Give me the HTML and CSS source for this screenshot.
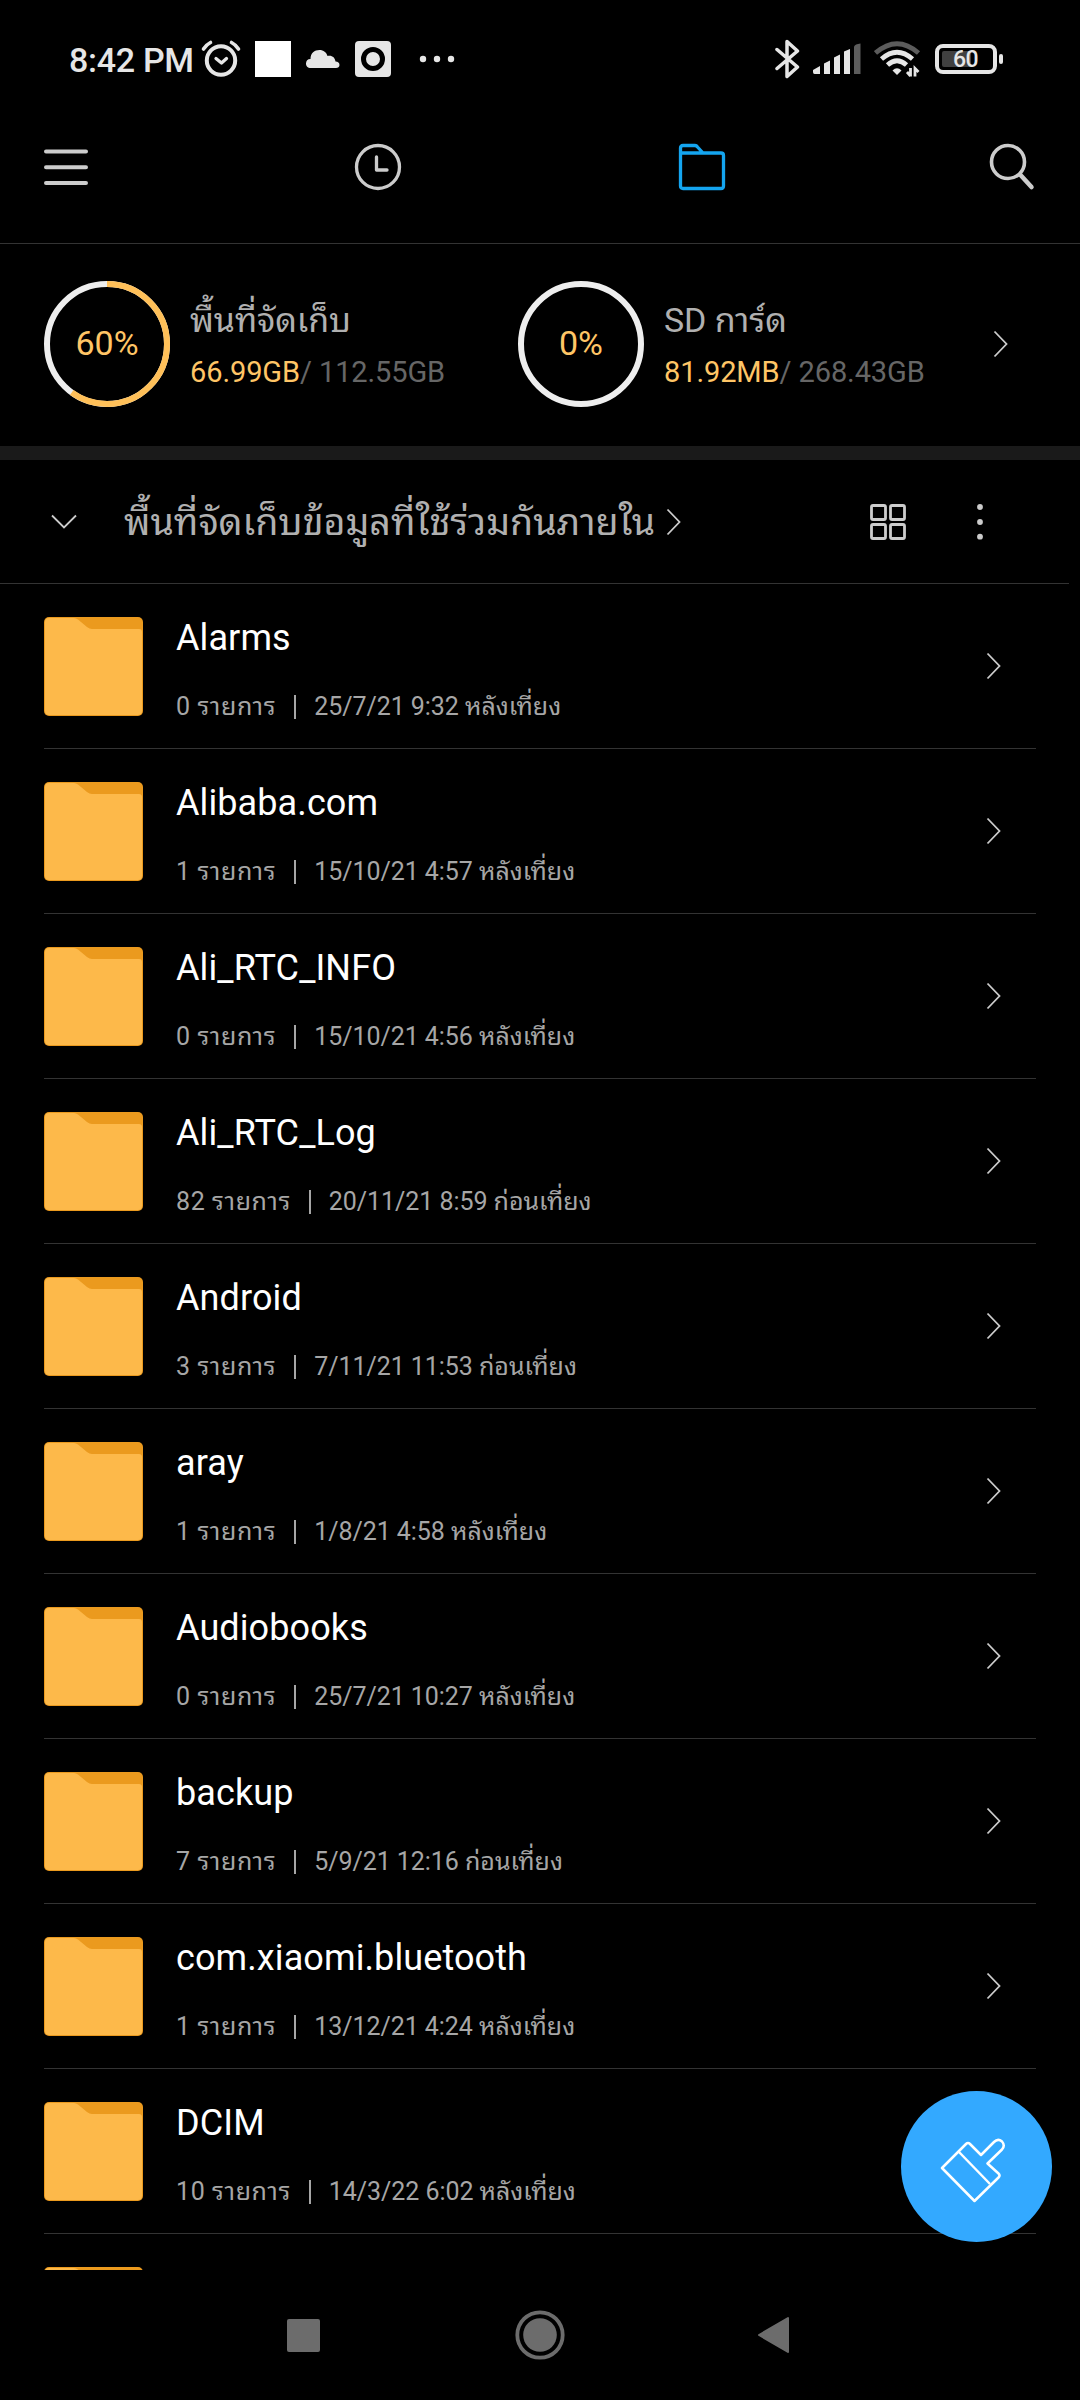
FILE: index.html
```html
<!DOCTYPE html>
<html lang="th">
<head>
    <meta charset="UTF-8">
    <meta name="viewport" content="width=device-width, initial-scale=1.0">
    <title>ตัวจัดการไฟล์</title>
    <link rel="stylesheet" href="styles.css">
</head>
<body>
    <!-- icons used in every row -->
    <svg class="sprite" width="0" height="0">
        <symbol id="folder" viewBox="0 0 99 99">
            <rect width="99" height="99" rx="5" fill="#eb9a1e"/>
            <path d="M5 1H30Q32 1 34 2.500L43 10Q45.500 12 48 12H95Q98 12 98 15V94Q98 98 94 98H5Q1 98 1 94V5Q1 1 5 1Z" fill="#fdb94a"/>
        </symbol>
        <symbol id="chevron" viewBox="0 0 16 28">
            <path d="M1.500 1.500L13.500 14L1.500 26.500" fill="none" stroke="#ccc" stroke-width="1.800"/>
        </symbol>
    </svg>

    <div class="screen">
        <div class="status-bar">
            <span class="time">8:42 PM</span>
            <svg class="alarm" width="40" height="38" viewBox="0 0 40 38">
                <g fill="none" stroke="#e6e6e6" stroke-linecap="round">
                    <circle cx="20" cy="20.500" r="14.200" stroke-width="4"/>
                    <path d="M2.500 9Q5.500 4.500 9.500 2.500M37.500 9Q34.500 4.500 30.500 2.500" stroke-width="3.600"/>
                    <path d="M15 18.500L20.500 23L25.500 18.500" stroke-width="3.300" stroke-linejoin="round"/>
                </g>
            </svg>
            <span class="white-square"></span>
            <svg class="cloud" width="34" height="20" viewBox="0 0 34 20">
                <path d="M5 19C1.500 19 0 17 0 14.500C0 12 1.500 10 4.500 10C4.500 4 8.500 1 13.500 1C17.500 1 20.500 3.500 21.500 7C26 6 29 8.500 29.500 12.500C32 12.500 33.500 14 33.500 16C33.500 18 32 19 30 19Z" fill="#e6e6e6"/>
            </svg>
            <svg class="camera" width="36" height="36" viewBox="0 0 36 36">
                <rect width="36" height="36" rx="4" fill="#e6e6e6"/>
                <circle cx="18" cy="18" r="9.500" fill="none" stroke="#000" stroke-width="5"/>
            </svg>
            <svg class="more" width="36" height="8" viewBox="0 0 36 8">
                <g fill="#e6e6e6"><circle cx="4" cy="4" r="3.200"/><circle cx="18" cy="4" r="3.200"/><circle cx="32" cy="4" r="3.200"/></g>
            </svg>
            <div class="status-right">
                <svg width="26" height="40" viewBox="0 0 26 40">
                    <path d="M2 10.500L22.500 28L12 37.500V2.500L22.500 12L2 29.500" fill="none" stroke="#e6e6e6" stroke-width="3.500" stroke-linecap="round" stroke-linejoin="round"/>
                </svg>
                <svg class="signal" width="48" height="32" viewBox="0 0 48 32">
                    <g fill="#e6e6e6">
                        <path d="M0 27L7 23V31H1.500Q0 31 0 29Z"/>
                        <path d="M11 20.500L17 17.500V31H11Z"/>
                        <path d="M21 14.500L27 11.500V31H21Z"/>
                        <path d="M31 8.500L37 6V31H31Z"/>
                        <path d="M41 3.500Q42 1 47.500 0.500V31H41Z" fill="#5c5c5c"/>
                    </g>
                </svg>
                <svg class="wifi" width="48" height="36" viewBox="0 0 48 36">
                    <g fill="none" stroke="#e6e6e6" stroke-width="4.800">
                        <path d="M1.500 12Q23 -6.500 44.500 12" stroke="#5c5c5c"/>
                        <path d="M7.500 18Q23 4.500 38.500 18"/>
                        <path d="M13.500 24Q23 15.500 32.500 24"/>
                    </g>
                    <path d="M18.500 29.500Q23 25 27.500 29.500L23 34Z" fill="#e6e6e6"/>
                    <path d="M36.500 27V35.500M36.500 35L33 31M41 35.500V27.500L44.500 31" fill="none" stroke="#e6e6e6" stroke-width="2.800"/>
                </svg>
                <div class="battery"><span class="level"></span><span class="percent">60</span></div>
                <span class="battery-tip"></span>
            </div>
        </div>

        <div class="toolbar">
            <svg width="44" height="38" viewBox="0 0 44 38">
                <path d="M2 3.500H42M2 19.300H42M2 35H42" stroke="#ccc" stroke-width="4" stroke-linecap="round"/>
            </svg>
            <svg class="recent" width="48" height="48" viewBox="0 0 48 48">
                <g fill="none" stroke="#ccc" stroke-linecap="round" stroke-linejoin="round">
                    <circle cx="24" cy="24" r="21.500" stroke-width="3.300"/>
                    <path d="M22.500 14V27H33" stroke-width="3.300"/>
                </g>
            </svg>
            <svg class="files" width="48" height="48" viewBox="0 0 48 48">
                <path d="M2.500 10V5Q2.500 2.500 5 2.500H17Q18.500 2.500 19.500 4L25 10H43Q45.500 10 45.500 12.500V43Q45.500 45.500 43 45.500H5Q2.500 45.500 2.500 43ZH26" fill="none" stroke="#14a5f0" stroke-width="3.300" stroke-linejoin="round"/>
            </svg>
            <svg class="search" width="46" height="48" viewBox="0 0 46 48">
                <circle cx="19" cy="19" r="16.500" fill="none" stroke="#ccc" stroke-width="3.600"/>
                <path d="M31.500 32L42.500 44" stroke="#ccc" stroke-width="4.500" stroke-linecap="round"/>
            </svg>
        </div>

        <div class="storage">
            <div class="ring">
                <svg width="126" height="126" viewBox="0 0 126 126">
                    <circle cx="63" cy="63" r="60" fill="none" stroke="#eee" stroke-width="6"/>
                    <circle cx="63" cy="63" r="60" fill="none" stroke="#ffc059" stroke-width="6" pathLength="100" stroke-dasharray="60 40" transform="rotate(-90 63 63)"/>
                </svg>
                <span>60%</span>
            </div>
            <div class="usage">
                <div class="label">พื้นที่จัดเก็บ</div>
                <div class="size"><b>66.99GB</b>/ 112.55GB</div>
            </div>
            <div class="ring ring-sd">
                <svg width="126" height="126" viewBox="0 0 126 126">
                    <circle cx="63" cy="63" r="60" fill="none" stroke="#eee" stroke-width="6"/>
                </svg>
                <span>0%</span>
            </div>
            <div class="usage">
                <div class="label">SD การ์ด</div>
                <div class="size"><b>81.92MB</b>/ 268.43GB</div>
            </div>
            <svg class="storage-arrow" width="16" height="28"><use href="#chevron"/></svg>
        </div>

        <div class="path-bar">
            <svg width="26" height="16" viewBox="0 0 26 16">
                <path d="M1 1.500L13 13.500L25 1.500" fill="none" stroke="#ccc" stroke-width="1.800"/>
            </svg>
            <span class="path">พื้นที่จัดเก็บข้อมูลที่ใช้ร่วมกันภายใน</span>
            <svg class="path-arrow" width="16" height="28"><use href="#chevron"/></svg>
            <svg class="grid-icon" width="36" height="36" viewBox="0 0 36 36">
                <g fill="none" stroke="#ccc" stroke-width="2.800">
                    <rect x="1.500" y="1.500" width="14" height="14" rx="1.500"/>
                    <rect x="20.500" y="1.500" width="14" height="14" rx="1.500"/>
                    <rect x="1.500" y="20.500" width="14" height="14" rx="1.500"/>
                    <rect x="20.500" y="20.500" width="14" height="14" rx="1.500"/>
                </g>
            </svg>
            <svg class="dots" width="6" height="36" viewBox="0 0 6 36">
                <g fill="#ccc"><circle cx="3" cy="3" r="2.900"/><circle cx="3" cy="18" r="2.900"/><circle cx="3" cy="32.700" r="2.900"/></g>
            </svg>
        </div>

        <div class="file-list" id="fileList"></div>

        <div class="nav-bar">
            <span class="nav-recent"></span>
            <svg class="nav-home" width="50" height="50" viewBox="0 0 50 50">
                <circle cx="25" cy="25" r="22.700" fill="none" stroke="#6c6c6c" stroke-width="3.800"/>
                <circle cx="25" cy="25" r="16.800" fill="#6c6c6c"/>
            </svg>
            <svg class="nav-back" width="34" height="38" viewBox="0 0 34 38">
                <path d="M2 19L31 2V36Z" fill="#6c6c6c" stroke="#6c6c6c" stroke-width="2" stroke-linejoin="round"/>
            </svg>
        </div>

        <div class="clean-button">
            <svg width="66" height="66" viewBox="0 0 66 66">
                <g fill="none" stroke="#fff" stroke-width="2.500" stroke-linejoin="round">
                    <path d="M2 31L26 7Q28 5 30 7L41 18L54 5Q58 1 62 4.500Q65.500 8.500 62 12.500L47.500 26.500L58.500 36.500Q60.500 38.500 58.500 40.500L34.500 64Z"/>
                    <path d="M19 15L50 47"/>
                </g>
            </svg>
        </div>
    </div>

    <script>
        const folders = [
            ['Alarms', '0', '25/7/21 9:32 หลังเที่ยง'],
            ['Alibaba.com', '1', '15/10/21 4:57 หลังเที่ยง'],
            ['Ali_RTC_INFO', '0', '15/10/21 4:56 หลังเที่ยง'],
            ['Ali_RTC_Log', '82', '20/11/21 8:59 ก่อนเที่ยง'],
            ['Android', '3', '7/11/21 11:53 ก่อนเที่ยง'],
            ['aray', '1', '1/8/21 4:58 หลังเที่ยง'],
            ['Audiobooks', '0', '25/7/21 10:27 หลังเที่ยง'],
            ['backup', '7', '5/9/21 12:16 ก่อนเที่ยง'],
            ['com.xiaomi.bluetooth', '1', '13/12/21 4:24 หลังเที่ยง'],
            ['DCIM', '10', '14/3/22 6:02 หลังเที่ยง']
        ];

        const list = document.getElementById('fileList');
        folders.forEach(([name, count, date]) => {
            const row = document.createElement('div');
            row.className = 'file-row';
            row.innerHTML = `
                <svg width="99" height="99"><use href="#folder"/></svg>
                <div class="file-info">
                    <div class="file-name">${name}</div>
                    <div class="file-meta"><span class="count">${count} รายการ</span><i></i><span class="date">${date}</span></div>
                </div>
                <svg class="file-arrow" width="16" height="28"><use href="#chevron"/></svg>
            `;
            list.appendChild(row);
        });

        // the next folder is cut off by the navigation bar
        const last = document.createElement('div');
        last.className = 'file-row';
        last.innerHTML = '<svg width="99" height="99"><use href="#folder"/></svg>';
        list.appendChild(last);
    </script>
</body>
</html>
```

FILE: styles.css
```css
* {
    box-sizing: border-box;
}
body {
    margin: 0;
    background-color: #000;
    color: #b0b0b0;
    font-family: Roboto, 'Noto Sans Thai Looped', 'Droid Sans Thai', Loma, 'Noto Sans Thai', 'Noto Sans', sans-serif;
}
svg {
    display: block;
    flex-shrink: 0;
}
.sprite {
    position: absolute;
}
.screen {
    position: relative;
    display: flex;
    flex-direction: column;
    width: 1080px;
    height: 2400px;
    overflow: hidden;
}
.status-bar {
    display: flex;
    align-items: center;
    height: 118px;
    padding-left: 69px;
}
.time {
    width: 132px;
    font-size: 34px;
    font-weight: 500;
    line-height: 40px;
    letter-spacing: -0.3px;
    color: #e6e6e6;
    white-space: nowrap;
    padding-top: 1px;
}
.white-square {
    width: 36px;
    height: 36px;
    margin-left: 14px;
    background-color: #fff;
}
.cloud {
    margin-left: 15px;
}
.camera {
    margin-left: 15px;
}
.more {
    margin-left: 28px;
}
.status-right {
    display: flex;
    align-items: center;
    margin-left: auto;
    padding-right: 77px;
}
.signal {
    margin-left: 12px;
}
.wifi {
    margin-left: 13px;
}
.battery {
    display: flex;
    align-items: center;
    width: 62px;
    height: 30px;
    margin-left: 13px;
    padding-left: 3px;
    border: 4px solid #e6e6e6;
    border-radius: 8px;
}
.level {
    width: 29px;
    height: 16px;
    border-radius: 2px;
    background-color: #404040;
}
.percent {
    margin-left: -18px;
    padding-top: 2px;
    font-size: 23px;
    font-weight: 500;
    line-height: 22px;
    letter-spacing: -0.5px;
    color: #e6e6e6;
}
.battery-tip {
    width: 4px;
    height: 10px;
    margin-left: 2px;
    border-radius: 2px;
    background-color: #e6e6e6;
}
.toolbar {
    display: flex;
    align-items: center;
    height: 126px;
    padding: 0 45px 28px 44px;
    border-bottom: 1px solid #333;
}
.recent {
    margin-left: 266px;
}
.files {
    margin-left: 276px;
}
.search {
    margin-left: auto;
}
.storage {
    display: flex;
    align-items: center;
    height: 216px;
    padding: 0 71px 3px 44px;
    border-bottom: 14px solid #1a1a1a;
}
.ring {
    display: grid;
    flex-shrink: 0;
    width: 126px;
    place-items: center;
    font-size: 34px;
    line-height: 40px;
    color: #ffc566;
}
.ring svg, .ring span {
    grid-area: 1 / 1;
}
.ring span {
    padding-bottom: 2px;
}
.ring-sd {
    margin-left: 20px;
}
.usage {
    width: 328px;
    padding: 6px 0 0 20px;
    white-space: nowrap;
}
.label {
    font-size: 34px;
    line-height: 50px;
    letter-spacing: -0.1px;
}
.size {
    font-size: 29px;
    line-height: 54px;
    letter-spacing: -0.1px;
    color: #666;
}
.size b {
    font-weight: 400;
    color: #ffc566;
}
.storage-arrow {
    margin-left: auto;
}
.path-bar {
    display: flex;
    align-items: center;
    width: 1069px;
    height: 124px;
    padding-left: 51px;
    border-bottom: 1px solid #333;
}
.path {
    width: 543px;
    padding-left: 47px;
    font-size: 37.6px;
    line-height: 50px;
    white-space: nowrap;
}
.path-arrow {
    margin-left: 46px;
}
.grid-icon {
    margin-left: 188px;
}
.dots {
    margin-left: 71px;
}
.file-list {
    height: 1686px;
    padding: 0 44px;
    overflow: hidden;
}
.file-row {
    display: flex;
    align-items: center;
    height: 165px;
    border-bottom: 1px solid #333;
}
.file-info {
    padding: 8px 0 0 33px;
}
.file-name {
    font-size: 36px;
    line-height: 44px;
    letter-spacing: 0.1px;
    color: #fff;
}
.file-meta {
    display: flex;
    align-items: center;
    height: 34px;
    margin-top: 30px;
    font-size: 25px;
    line-height: 34px;
    color: #a6a6a6;
    white-space: nowrap;
}
.file-meta .count {
    letter-spacing: 0.6px;
}
.file-meta .date {
    letter-spacing: -0.05px;
}
.file-meta i {
    width: 2px;
    height: 24px;
    margin: 0 18px;
    background-color: #a6a6a6;
}
.file-arrow {
    margin-left: auto;
    margin-right: 34px;
}
.nav-bar {
    display: flex;
    align-items: center;
    height: 130px;
    padding-left: 287px;
}
.nav-recent {
    width: 33px;
    height: 33px;
    border-radius: 2px;
    background-color: #6c6c6c;
}
.nav-home {
    margin-left: 195px;
}
.nav-back {
    margin-left: 192px;
}
/* floats above the list */
.clean-button {
    position: absolute;
    right: 28px;
    bottom: 158px;
    display: flex;
    align-items: center;
    justify-content: center;
    width: 151px;
    height: 151px;
    padding: 6px 8px 0 0;
    border-radius: 50%;
    background-color: #33a9ff;
}
```
